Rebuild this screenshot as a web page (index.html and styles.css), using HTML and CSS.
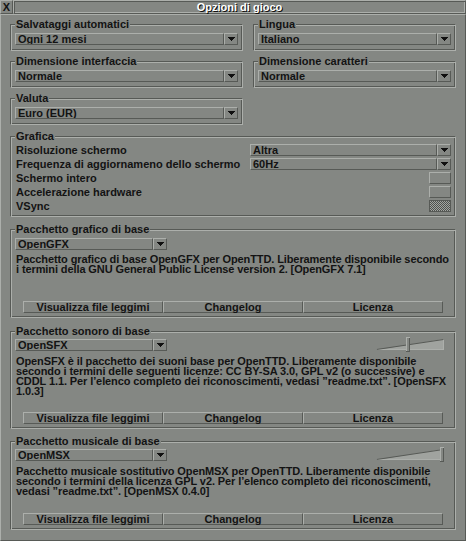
FILE: index.html
```html
<!DOCTYPE html>
<html lang="it">
<head>
<meta charset="utf-8">
<title>Opzioni di gioco</title>
<link rel="stylesheet" href="styles.css">
</head>
<body>
<div class="window">
  <div class="titlebar">
    <div class="close">X</div>
    <div class="caption"><span class="caption-text">Opzioni di gioco</span></div>
  </div>
  <div class="body">
    <div class="top-grid">
      <fieldset class="frame small">
        <legend>Salvataggi automatici</legend>
        <div class="dropdown"><span class="dd-text">Ogni 12 mesi</span><span class="dd-btn"><svg class="arrow" width="7" height="4" viewBox="0 0 7 4"><path d="M0 0h7v1H0zM1 1h5v1H1zM2 2h3v1H2zM3 3h1v1H3z"/></svg></span></div>
      </fieldset>
      <fieldset class="frame small">
        <legend>Lingua</legend>
        <div class="dropdown"><span class="dd-text">Italiano</span><span class="dd-btn"><svg class="arrow" width="7" height="4" viewBox="0 0 7 4"><path d="M0 0h7v1H0zM1 1h5v1H1zM2 2h3v1H2zM3 3h1v1H3z"/></svg></span></div>
      </fieldset>
      <fieldset class="frame small">
        <legend>Dimensione interfaccia</legend>
        <div class="dropdown"><span class="dd-text">Normale</span><span class="dd-btn"><svg class="arrow" width="7" height="4" viewBox="0 0 7 4"><path d="M0 0h7v1H0zM1 1h5v1H1zM2 2h3v1H2zM3 3h1v1H3z"/></svg></span></div>
      </fieldset>
      <fieldset class="frame small">
        <legend>Dimensione caratteri</legend>
        <div class="dropdown"><span class="dd-text">Normale</span><span class="dd-btn"><svg class="arrow" width="7" height="4" viewBox="0 0 7 4"><path d="M0 0h7v1H0zM1 1h5v1H1zM2 2h3v1H2zM3 3h1v1H3z"/></svg></span></div>
      </fieldset>
      <fieldset class="frame small">
        <legend>Valuta</legend>
        <div class="dropdown"><span class="dd-text">Euro (EUR)</span><span class="dd-btn"><svg class="arrow" width="7" height="4" viewBox="0 0 7 4"><path d="M0 0h7v1H0zM1 1h5v1H1zM2 2h3v1H2zM3 3h1v1H3z"/></svg></span></div>
      </fieldset>
    </div>

    <fieldset class="frame grafica">
      <legend>Grafica</legend>
      <div class="opt-row">
        <span class="opt-label">Risoluzione schermo</span>
        <div class="dropdown res"><span class="dd-text">Altra</span><span class="dd-btn"><svg class="arrow" width="7" height="4" viewBox="0 0 7 4"><path d="M0 0h7v1H0zM1 1h5v1H1zM2 2h3v1H2zM3 3h1v1H3z"/></svg></span></div>
      </div>
      <div class="opt-row">
        <span class="opt-label">Frequenza di aggiornameno dello schermo</span>
        <div class="dropdown res"><span class="dd-text">60Hz</span><span class="dd-btn"><svg class="arrow" width="7" height="4" viewBox="0 0 7 4"><path d="M0 0h7v1H0zM1 1h5v1H1zM2 2h3v1H2zM3 3h1v1H3z"/></svg></span></div>
      </div>
      <div class="opt-row">
        <span class="opt-label">Schermo intero</span>
        <span class="toggle"></span>
      </div>
      <div class="opt-row">
        <span class="opt-label">Accelerazione hardware</span>
        <span class="toggle"></span>
      </div>
      <div class="opt-row">
        <span class="opt-label">VSync</span>
        <span class="toggle dither"></span>
      </div>
    </fieldset>

    <fieldset class="frame set set-gfx">
      <legend>Pacchetto grafico di base</legend>
      <div class="set-row">
        <div class="dropdown set-dd"><span class="dd-text">OpenGFX</span><span class="dd-btn"><svg class="arrow" width="7" height="4" viewBox="0 0 7 4"><path d="M0 0h7v1H0zM1 1h5v1H1zM2 2h3v1H2zM3 3h1v1H3z"/></svg></span></div>
      </div>
      <p class="desc desc-short">Pacchetto grafico di base OpenGFX per OpenTTD. Liberamente disponibile secondo<br>i termini della GNU General Public License version 2. [OpenGFX 7.1]</p>
      <div class="btn-row">
        <span class="btn">Visualizza file leggimi</span>
        <span class="btn">Changelog</span>
        <span class="btn">Licenza</span>
      </div>
    </fieldset>

    <fieldset class="frame set set-sfx">
      <legend>Pacchetto sonoro di base</legend>
      <div class="set-row with-slider">
        <div class="dropdown set-dd"><span class="dd-text">OpenSFX</span><span class="dd-btn"><svg class="arrow" width="7" height="4" viewBox="0 0 7 4"><path d="M0 0h7v1H0zM1 1h5v1H1zM2 2h3v1H2zM3 3h1v1H3z"/></svg></span></div>
        <svg class="slider" width="68" height="15" viewBox="0 0 68 15">
          <polygon class="wedge-fill" points="0,13 68,2 68,13"/>
          <line class="wedge-light" x1="0" y1="12.5" x2="68" y2="12.5"/>
          <line class="wedge-light" x1="67.5" y1="2" x2="67.5" y2="13"/>
          <line class="wedge-dark" x1="0.5" y1="12.5" x2="67.5" y2="2.5"/>
          <rect class="knob" x="30" y="0" width="4" height="15"/>
          <path class="knob-light" d="M30 0h4v1h-4zM30 0h1v15h-1z"/>
          <path class="knob-dark" d="M33 1h1v14h-1zM30 14h4v1h-4z"/>
        </svg>
      </div>
      <p class="desc desc-long">OpenSFX è il pacchetto dei suoni base per OpenTTD. Liberamente disponibile<br>secondo i termini delle seguenti licenze: CC BY-SA 3.0, GPL v2 (o successive) e<br>CDDL 1.1. Per l’elenco completo dei riconoscimenti, vedasi ”readme.txt”. [OpenSFX<br>1.0.3]</p>
      <div class="btn-row">
        <span class="btn">Visualizza file leggimi</span>
        <span class="btn">Changelog</span>
        <span class="btn">Licenza</span>
      </div>
    </fieldset>

    <fieldset class="frame set set-msx">
      <legend>Pacchetto musicale di base</legend>
      <div class="set-row with-slider">
        <div class="dropdown set-dd"><span class="dd-text">OpenMSX</span><span class="dd-btn"><svg class="arrow" width="7" height="4" viewBox="0 0 7 4"><path d="M0 0h7v1H0zM1 1h5v1H1zM2 2h3v1H2zM3 3h1v1H3z"/></svg></span></div>
        <svg class="slider" width="68" height="15" viewBox="0 0 68 15">
          <polygon class="wedge-fill" points="0,13 68,2 68,13"/>
          <line class="wedge-light" x1="0" y1="12.5" x2="68" y2="12.5"/>
          <line class="wedge-light" x1="67.5" y1="2" x2="67.5" y2="13"/>
          <line class="wedge-dark" x1="0.5" y1="12.5" x2="67.5" y2="2.5"/>
          <rect class="knob" x="64" y="0" width="4" height="15"/>
          <path class="knob-light" d="M64 0h4v1h-4zM64 0h1v15h-1z"/>
          <path class="knob-dark" d="M67 1h1v14h-1zM64 14h4v1h-4z"/>
        </svg>
      </div>
      <p class="desc desc-short">Pacchetto musicale sostitutivo OpenMSX per OpenTTD. Liberamente disponibile<br>secondo i termini della licenza GPL v2. Per l’elenco completo dei riconoscimenti,<br>vedasi ”readme.txt”. [OpenMSX 0.4.0]</p>
      <div class="btn-row">
        <span class="btn">Visualizza file leggimi</span>
        <span class="btn">Changelog</span>
        <span class="btn">Licenza</span>
      </div>
    </fieldset>
  </div>
</div>
</body>
</html>
```

FILE: styles.css
```css
:root {
  --bg: #848783;
  --light: #acafab;
  --dark: #575a56;
  --ink: #131313;
}

* { box-sizing: border-box; }

html, body {
  margin: 0;
  padding: 0;
  background: var(--bg);
}

.window {
  width: 466px;
  height: 541px;
  display: flex;
  flex-direction: column;
  background: var(--bg);
  color: var(--ink);
  font-family: "Liberation Sans", Arial, sans-serif;
  font-weight: bold;
  font-size: 11px;
  line-height: 10px;
}

/* ---------- title bar ---------- */
.titlebar {
  display: flex;
  height: 14px;
}

.close {
  width: 13px;
  height: 14px;
  border: 1px solid;
  border-color: var(--light) var(--dark) var(--dark) var(--light);
  display: flex;
  align-items: center;
  justify-content: center;
  color: var(--ink);
}

.caption {
  flex: 1;
  border: 1px solid;
  border-color: var(--light) var(--dark) var(--dark) var(--light);
  box-shadow: inset 1px 1px 0 var(--dark), inset -1px -1px 0 var(--light);
  display: flex;
  align-items: center;
  justify-content: center;
}

.caption-text {
  color: #ffffff;
  text-shadow: 1px 1px 0 #101010;
}

/* ---------- body ---------- */
.body {
  flex: 1;
  display: flex;
  flex-direction: column;
  border: 1px solid;
  border-color: var(--light) var(--dark) var(--dark) var(--light);
  padding: 4px 9px 10px 9px;
}

.top-grid {
  display: grid;
  grid-template-columns: 233px 203px;
  grid-auto-rows: 32px;
  column-gap: 10px;
  row-gap: 5px;
}

/* ---------- frames ---------- */
.frame {
  margin: 0;
  min-width: 0;
  padding: 0 4px 4px 4px;
  border: 1px solid;
  border-color: var(--dark) var(--light) var(--light) var(--dark);
  box-shadow: inset 1px 1px 0 var(--light), inset -1px -1px 0 var(--dark);
}

.frame legend {
  padding: 0 1px;
  height: 10px;
  line-height: 10px;
  background: var(--bg);
  white-space: nowrap;
}

.frame.small {
  padding-top: 4px;
  padding-bottom: 5px;
}

.frame.grafica {
  margin-top: 6px;
  padding-top: 3px;
}

.set-gfx {
  margin-top: 7px;
  padding-top: 4px;
}

.set-sfx {
  margin-top: 8px;
  padding-top: 1px;
}

.set-msx {
  margin-top: 7px;
  padding-top: 1px;
}

/* ---------- dropdowns & buttons ---------- */
.dropdown {
  display: flex;
  height: 12px;
}

.dd-text {
  flex: 1;
  min-width: 0;
  padding-left: 2px;
  border: 1px solid;
  border-color: var(--light) var(--dark) var(--dark) var(--light);
  white-space: nowrap;
  overflow: hidden;
}

.dd-btn {
  width: 14px;
  border: 1px solid;
  border-color: var(--light) var(--dark) var(--dark) var(--light);
  display: flex;
  align-items: center;
  justify-content: center;
}

.arrow {
  display: block;
  fill: #101010;
  shape-rendering: crispEdges;
}

/* ---------- grafica rows ---------- */
.opt-row {
  display: flex;
  justify-content: space-between;
  align-items: center;
  height: 12px;
}

.opt-row + .opt-row {
  margin-top: 2px;
}

.opt-label {
  padding-left: 1px;
  white-space: nowrap;
}

.dropdown.res {
  width: 201px;
}

.toggle {
  width: 22px;
  height: 12px;
  border: 1px solid;
  border-color: var(--light) var(--dark) var(--dark) var(--light);
}

.toggle.dither {
  border-color: var(--dark);
  background: repeating-conic-gradient(#4f524e 0 25%, #a3a6a2 0 50%) 0 0 / 2px 2px;
}

/* ---------- base set frames ---------- */
.set-row {
  display: flex;
  justify-content: space-between;
  align-items: flex-start;
}

.set-row.with-slider {
  height: 15px;
}

.with-slider .set-dd {
  margin-top: 2px;
}

.set-dd {
  width: 152px;
}

.slider {
  display: block;
  margin-right: 7px;
}

.wedge-fill { fill: #a0a39f; }
.wedge-light { stroke: var(--light); stroke-width: 1; }
.wedge-dark { stroke: var(--dark); stroke-width: 1; }
.knob { fill: var(--bg); }
.knob-light { fill: var(--light); }
.knob-dark { fill: var(--dark); }

.desc {
  margin: 4px 0 0 0;
  padding-left: 1px;
  white-space: nowrap;
  letter-spacing: -0.1px;
  overflow: hidden;
}

.desc-short { height: 47px; }
.desc-long { height: 56px; }

.btn-row {
  display: flex;
  margin: 0 8px;
}

.btn {
  flex: 1;
  height: 12px;
  border: 1px solid;
  border-color: var(--light) var(--dark) var(--dark) var(--light);
  text-align: center;
  white-space: nowrap;
}
```
